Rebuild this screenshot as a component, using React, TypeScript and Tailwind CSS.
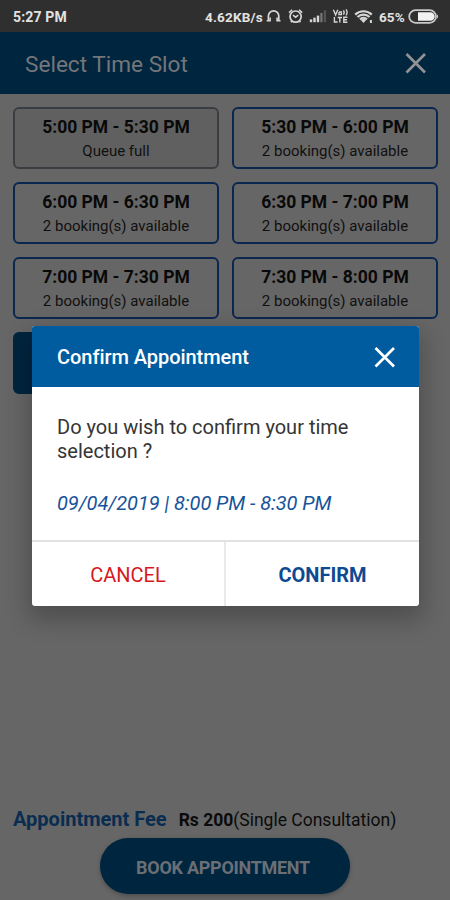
import React from 'react';

type Slot = { time: string; note: string; state: 'full' | 'open' | 'selected' };

const slots: Slot[] = [
  { time: '5:00 PM - 5:30 PM', note: 'Queue full', state: 'full' },
  { time: '5:30 PM - 6:00 PM', note: '2 booking(s) available', state: 'open' },
  { time: '6:00 PM - 6:30 PM', note: '2 booking(s) available', state: 'open' },
  { time: '6:30 PM - 7:00 PM', note: '2 booking(s) available', state: 'open' },
  { time: '7:00 PM - 7:30 PM', note: '2 booking(s) available', state: 'open' },
  { time: '7:30 PM - 8:00 PM', note: '2 booking(s) available', state: 'open' },
  { time: '', note: '', state: 'selected' },
];

const slotStyles = {
  full: 'border-[#3a3e42] bg-[#606060]',
  open: 'border-[#0a2750] bg-[#666666]',
  selected: 'border-[#00253f] bg-[#00253f]',
};

function CloseIcon() {
  return (
    <svg width="22" height="22" viewBox="0 0 22 22" fill="none" stroke="currentColor" strokeWidth="2.7">
      <path d="M1.5 2 20 20.5M20 2 1.5 20.5" />
    </svg>
  );
}

function StatusIcons() {
  return (
    <svg className="ml-[2px] shrink-0" width="110" height="20" viewBox="264 6 110 20" fill="none" stroke="#d6d6d6">
      <path d="M267.4 20.5V16a5.2 5.2 0 0 1 10.4 0v4.5" strokeWidth="1.7" />
      <path d="M265.7 20.8h3.4v-3.4M279.5 20.8h-3.4v-3.4" strokeWidth="1.6" />
      <circle cx="294.6" cy="16.6" r="5.6" strokeWidth="1.7" />
      <path d="M288 12.6l3.2-2.9M301.2 12.6l-3.2-2.9M292 15.2l2.6 2 2.7-2M290.8 21l-1 1.3M298.5 21l1 1.3" strokeWidth="1.5" />
      <g stroke="none" fill="#d6d6d6">
        <rect x="308.8" y="19.4" width="2.4" height="2.8" />
        <rect x="312.3" y="17.7" width="2.4" height="4.5" />
        <rect x="315.8" y="15.6" width="2.4" height="6.6" />
        <rect x="319.3" y="13" width="2.2" height="9.2" fill="#777777" />
        <rect x="322.8" y="10.2" width="2.2" height="12" fill="#555555" />
      </g>
      <path d="M332.4 9.8l2.2 5.2 2.2-5.2M338 12v2.6h2.4V12H338M342.4 10.4q1.6 2.1 0 4.2M345 9.4q2.2 3 0 6M333.4 17v5h3.2M336.6 17.5h4.4M338.8 17.5v5M346.4 17.3h-3.6v4.9h3.6M342.8 19.7h3.2" strokeWidth="1.4" />
      <path d="M354.2 14.6a12 12 0 0 1 16.6 0M356.5 17a8.6 8.6 0 0 1 12 0M359 19.4a5 5 0 0 1 7 0" strokeWidth="2.2" />
      <path d="M359.8 20.1l2.7 3 2.7-3a4 4 0 0 0-5.4 0Z" fill="#d6d6d6" stroke="none" />
      <path d="M369.9 20v3" strokeWidth="2" />
    </svg>
  );
}

function StatusBar() {
  return (
    <header className="flex h-8 shrink-0 items-center bg-[#2f2f2f] pl-[13px] text-[14px] font-bold text-[#e2e2e2]">
      <span className="mt-[2px] tracking-[0.15px]">5:27 PM</span>
      <div className="ml-auto flex items-center pr-[11px]">
        <span className="mt-[2px] whitespace-nowrap text-[13.5px] tracking-[0.2px]">4.62KB/s</span>
        <StatusIcons />
        <span className="mt-[2px] ml-[4px] text-[13.5px] tracking-[0.2px]">65%</span>
        <svg className="mt-px ml-[3px] shrink-0" width="31" height="15" viewBox="0 0 31 15" fill="none">
          <rect x="1.2" y="1.2" width="26.8" height="12.6" rx="6.3" stroke="#c9c9c9" strokeWidth="1.8" />
          <path d="M10 3.2h12.3a4.3 4.3 0 0 1 0 8.6H10z" fill="#f2f2f2" />
          <path d="M29 5.2v4.6a3 3 0 0 0 0-4.6" fill="#c9c9c9" />
        </svg>
      </div>
    </header>
  );
}

function SlotCard({ slot }: { slot: Slot }) {
  return (
    <div className={`flex h-[62px] flex-col items-center rounded-[6px] border-2 pt-[6px] whitespace-nowrap ${slotStyles[slot.state]}`}>
      <span className="text-[17.5px] leading-6 font-bold text-[#090909]">{slot.time}</span>
      <span className="text-[15px] leading-6 text-[#101010]">{slot.note}</span>
    </div>
  );
}

function ConfirmDialog() {
  return (
    <section role="dialog" className="absolute top-[326px] left-8 flex h-[280px] w-[387px] flex-col overflow-hidden rounded-[3px] bg-white shadow-[0_10px_24px_4px_rgba(0,0,0,0.24)]">
      <div className="flex h-[61px] shrink-0 items-center justify-between bg-[#005c9f] pr-[23px] pl-[25px] text-white">
        <h2 className="text-[20px] font-medium tracking-[-0.05px]">Confirm Appointment</h2>
        <CloseIcon />
      </div>
      <div className="flex-1 px-[25px] pt-[28px] whitespace-nowrap">
        <p className="text-[20px] leading-6 text-[#353535]">Do you wish to confirm your time<br />selection ?</p>
        <p className="mt-[28px] text-[20px] leading-6 tracking-[-0.06px] text-[#17549a] italic">09/04/2019 | 8:00 PM - 8:30 PM</p>
      </div>
      <div className="flex h-[66px] shrink-0 border-t-2 border-[#e2e2e2] text-[20px]">
        <button className="w-[194px] border-r-2 border-[#e9e9e9] pt-px text-[#d81820]">CANCEL</button>
        <button className="flex-1 pt-px font-bold text-[#0e4a91]">CONFIRM</button>
      </div>
    </section>
  );
}

export default function App() {
  return (
    <div className="relative flex h-[900px] w-[450px] flex-col overflow-hidden bg-[#666666] font-['Roboto',sans-serif]">
      <StatusBar />
      <div className="flex h-[62px] shrink-0 items-center justify-between bg-[#00253f] pr-[23px] pl-[25px] text-[#747679]">
        <h1 className="mt-[4px] text-[22.6px]">Select Time Slot</h1>
        <span className="text-[#929292]"><CloseIcon /></span>
      </div>
      <main className="grid grid-cols-2 gap-[13px] pt-[13px] pr-3 pl-[13px]">
        {slots.map((slot, i) => <SlotCard key={i} slot={slot} />)}
      </main>
      <footer className="mt-auto flex flex-col pb-[6px]">
        <div className="flex items-baseline pl-[13px] whitespace-nowrap text-[#0b0b0b]">
          <span className="text-[20px] leading-7 font-bold text-[#092d50]">Appointment Fee</span>
          <span className="ml-3 text-[17.5px] font-bold">Rs 200</span>
          <span className="text-[17.5px]">(Single Consultation)</span>
        </div>
        <button className="mt-[5px] h-[56px] w-[250px] self-center rounded-full bg-[#00253f] pt-[2px] pr-1 text-[18px] font-bold tracking-[-0.28px] text-[#6a6f76] shadow-[0_2px_4px_rgba(0,0,0,0.25)]">
          BOOK APPOINTMENT
        </button>
      </footer>
      <ConfirmDialog />
    </div>
  );
}
